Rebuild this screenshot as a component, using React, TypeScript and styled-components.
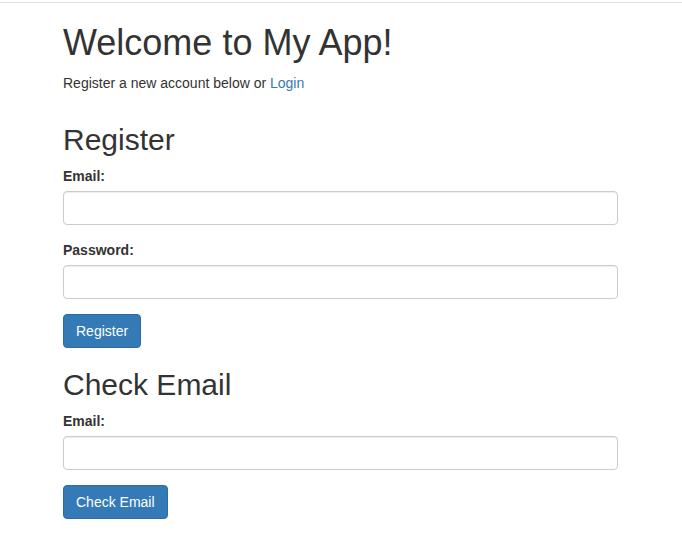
import React from "react";
import styled, { createGlobalStyle } from "styled-components";

const Global = createGlobalStyle`
  html, body { margin: 0; padding: 0; background: #fff; }
  body {
    font-family: "Liberation Sans", Arial, Helvetica, sans-serif;
    font-size: 14px;
    line-height: 1.428571429;
    color: #333;
  }
  * { box-sizing: border-box; }
`;

const TopBar = styled.div`
  margin-top: 2px;
  border-top: 1px solid #dfdfdf;
`;

const Container = styled.main`
  padding: 0 64px 20px 63px;
`;

const Title = styled.h1`
  font-size: 36px;
  font-weight: 500;
  line-height: 1.1;
  margin: 20px 0 10px;
`;

const Lead = styled.p`
  margin: 0 0 30px;
`;

const Link = styled.a`
  color: #337ab7;
  text-decoration: none;
`;

const SectionTitle = styled.h2`
  font-size: 30px;
  font-weight: 500;
  line-height: 1.1;
  margin: 20px 0 10px;
`;

const Form = styled.form`
  margin: 0;
`;

const FormGroup = styled.div`
  margin-bottom: 15px;
`;

const Label = styled.label`
  display: inline-block;
  max-width: 100%;
  margin-bottom: 5px;
  font-weight: 700;
`;

const Input = styled.input`
  display: block;
  width: 100%;
  height: 34px;
  padding: 6px 12px;
  font-family: inherit;
  font-size: 14px;
  line-height: 1.428571429;
  color: #555;
  background: #fff;
  border: 1px solid #ccc;
  border-radius: 4px;
  box-shadow: inset 0 1px 1px rgba(0, 0, 0, 0.075);
  outline: none;
`;

const Button = styled.button`
  display: inline-block;
  padding: 6px 12px;
  height: 34px;
  font-family: inherit;
  font-size: 14px;
  line-height: 1.428571429;
  color: #fff;
  background: #337ab7;
  border: 1px solid #2e6da4;
  border-radius: 4px;
  cursor: pointer;
`;

export default function App() {
  return (
    <>
      <Global />
      <TopBar />
      <Container>
        <Title>Welcome to My App!</Title>
        <Lead>
          Register a new account below or <Link href="#">Login</Link>
        </Lead>
        <SectionTitle>Register</SectionTitle>
        <Form onSubmit={(e) => e.preventDefault()}>
          <FormGroup>
            <Label htmlFor="reg-email">Email:</Label>
            <Input id="reg-email" type="email" />
          </FormGroup>
          <FormGroup>
            <Label htmlFor="reg-password">Password:</Label>
            <Input id="reg-password" type="password" />
          </FormGroup>
          <Button type="submit">Register</Button>
        </Form>
        <SectionTitle>Check Email</SectionTitle>
        <Form onSubmit={(e) => e.preventDefault()}>
          <FormGroup>
            <Label htmlFor="check-email">Email:</Label>
            <Input id="check-email" type="email" />
          </FormGroup>
          <Button type="submit">Check Email</Button>
        </Form>
      </Container>
    </>
  );
}
